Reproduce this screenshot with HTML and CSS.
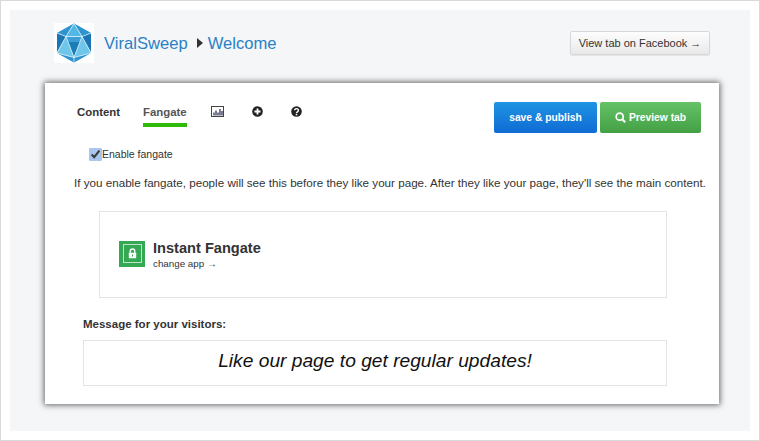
FILE: index.html
```html
<!DOCTYPE html>
<html lang="en">
<head>
<meta charset="utf-8">
<title>ViralSweep</title>
<link rel="stylesheet" href="styles.css">
</head>
<body>
<div class="frame">
  <div class="panel">
    <header class="top">
      <div class="logo">
        <svg width="40" height="40" viewBox="0 0 40 40">
          <polygon points="20,.5 37,10 37,30 20,39.500 3,30 3,10" fill="#6fc6ea"/>
          <polygon points="20,.5 37,10 28,13.500" fill="#2f93cf"/>
          <polygon points="20,.5 3,10 12,13.500" fill="#2f93cf"/>
          <polygon points="20,.5 28,13.500 12,13.500" fill="#52b8e6"/>
          <polygon points="3,10 12,13.500 3,29" fill="#1b75b5"/>
          <polygon points="37,10 28,13.500 37,29" fill="#1b75b5"/>
          <polygon points="12,14 28,14 20,34" fill="#1b7db5"/>
          <polygon points="12,14 28,14 26,19 14,19" fill="#3d9fd6"/>
          <polygon points="20,39.500 3,30 20,34.500" fill="#2f93cf"/>
          <polygon points="20,39.500 37,30 20,34.500" fill="#2f93cf"/>
          <path d="M20 .5L12 13.500H28ZM3 10L12 13.500M37 10L28 13.500M3 30L12 13.500M37 30L28 13.500M12 13.500L20 34.500L28 13.500M3 30L20 34.500L37 30M20 34.500V39.500" fill="none" stroke="#e4f4fb" stroke-width=".8"/>
        </svg>
      </div>
      <h1 class="crumbs"><span>ViralSweep</span><i class="caret"></i><span>Welcome</span></h1>
      <a class="fb-btn">View tab on Facebook →</a>
    </header>
    <main class="card">
      <div class="toolbar">
        <nav class="tabs">
          <a class="tab">Content</a>
          <a class="tab active">Fangate</a>
          <a class="tab icon">
            <svg width="13" height="11" viewBox="0 0 13 11"><rect x=".5" y=".5" width="12" height="10" fill="#fff" stroke="#444"/><path d="M3 9.500V6.500M5 9.500V4.500M7 9.500V6.500M9 9.500V3M11 9.500V5" stroke="#22224a" stroke-width="1.200"/></svg>
          </a>
          <a class="tab icon">
            <svg width="11" height="11" viewBox="0 0 11 11"><circle cx="5.500" cy="5.500" r="5.300" fill="#222"/><path d="M5.500 2.500v6M2.500 5.500h6" stroke="#fff" stroke-width="1.800"/></svg>
          </a>
          <a class="tab icon">
            <svg width="11" height="11" viewBox="0 0 11 11"><circle cx="5.500" cy="5.500" r="5.300" fill="#222"/><path d="M3.600 4.300a1.900 1.700 0 1 1 2.900 1.500c-.7.400-1 .7-1 1.300" fill="none" stroke="#fff" stroke-width="1.400"/><rect x="4.700" y="7.800" width="1.600" height="1.500" fill="#fff"/></svg>
          </a>
        </nav>
        <div class="actions">
          <a class="btn blue">save &amp; publish</a>
          <a class="btn green">
            <svg width="11" height="11" viewBox="0 0 11 11"><circle cx="4.700" cy="4.700" r="3.500" fill="none" stroke="#fff" stroke-width="1.700"/><path d="M7.300 7.300L10.200 10.200" stroke="#fff" stroke-width="2"/></svg>
            Preview tab
          </a>
        </div>
      </div>
      <label class="enable"><input type="checkbox" checked>Enable fangate</label>
      <p class="intro">If you enable fangate, people will see this before they like your page. After they like your page, they'll see the main content.</p>
      <section class="app">
        <div class="app-icon">
          <svg width="19" height="19" viewBox="0 0 19 19"><rect x=".5" y=".5" width="18" height="18" fill="none" stroke="#bfe3c8"/><path d="M7.200 9V7.300a2.300 2.300 0 0 1 4.600 0V9" fill="none" stroke="#fff" stroke-width="1.300"/><rect x="5.800" y="8.800" width="7.400" height="5.400" rx=".5" fill="#fff"/><rect x="9" y="10.500" width="1" height="2" fill="#35a853"/></svg>
        </div>
        <div class="app-text">
          <div class="app-name">Instant Fangate</div>
          <div class="app-change">change app →</div>
        </div>
      </section>
      <div class="msg-label">Message for your visitors:</div>
      <div class="msg">Like our page to get regular updates!</div>
    </main>
  </div>
</div>
</body>
</html>
```
FILE: styles.css
```css
* { box-sizing: border-box; }
html, body { margin: 0; height: 100%; }
body { font-family: "Liberation Sans", Arial, sans-serif; background: #fff; color: #333; overflow: hidden; }
.frame { width: 760px; height: 441px; border: 1px solid #d9d9d9; padding: 9px 9px 9px; }
.panel { height: 421px; background: #f4f6f8; padding: 13px 40px 0 44px; }
.top { display: flex; align-items: center; height: 40px; }
.logo { width: 40px; height: 40px; background: #fff; flex: none; }
.logo svg { display: block; }
.crumbs { display: flex; align-items: center; margin: 0 0 0 10px; padding-top: 1px; font-size: 16.600px; font-weight: 400; color: #2b80c5; flex: 1; }
.caret { width: 0; height: 0; margin: -1px 5px 0 9px; border-left: 6px solid #333; border-top: 5px solid transparent; border-bottom: 5px solid transparent; }
.fb-btn { width: 140px; height: 24px; line-height: 22px; margin-top: -1px; text-align: center; font-size: 11px; color: #333; border: 1px solid #d8d8d8; border-radius: 2px; background: linear-gradient(#fdfdfd, #e9e9e9); box-shadow: 0 1px 1px rgba(0,0,0,.08); }
.card { width: 674px; height: 321px; margin: 20px 0 0 -9px; background: #fff; padding: 19px 18px 0 32px; box-shadow: 0 0 6px 1px rgba(0,0,0,.6); }
.toolbar { display: flex; justify-content: space-between; height: 31px; }
.tabs { display: flex; align-items: flex-start; }
.tab { display: block; height: 25px; font-size: 11.400px; line-height: 20px; font-weight: 700; color: #333; margin-right: 23px; }
.tab.active { color: #555; border-bottom: 4px solid #2fbb0a; height: 25px; margin-right: 24px; }
.tab.icon { margin-right: 28px; }
.tab.icon svg { display: block; margin-top: 4px; }
.actions { display: flex; gap: 3px; }
.btn { display: flex; align-items: center; justify-content: center; gap: 3px; height: 31px; font-size: 10.300px; font-weight: 700; color: #fff; border-radius: 2px; }
.blue { width: 103px; background: linear-gradient(#1f94e2, #0f6bd3); }
.green { width: 101px; background: linear-gradient(#66c266, #44a044); }
.enable { display: flex; align-items: center; margin: 11px 0 0 12px; height: 20px; font-size: 10.500px; color: #333; }
.enable input { width: 13px; height: 13px; margin: 0; accent-color: #a9c6ee; }
.intro { margin: 11px 0 0 -3px; font-size: 11.650px; line-height: 16px; white-space: nowrap; color: #333; }
.app { display: flex; align-items: center; gap: 8px; width: 568px; height: 87px; margin: 20px 0 0 22px; padding: 0 0 2px 19px; border: 1px solid #e4e4e4; }
.app-icon { width: 26px; height: 26px; background: #35a853; display: flex; align-items: center; justify-content: center; }
.app-text { padding-top: 2px; }
.app-name { font-size: 14.600px; font-weight: 700; line-height: 17px; color: #333; }
.app-change { margin-top: 1px; font-size: 9.800px; line-height: 12px; color: #333; }
.msg-label { margin: 20px 0 0 6px; font-size: 11.500px; font-weight: 700; line-height: 13px; color: #333; }
.msg { width: 584px; height: 46px; margin: 9px 0 0 6px; border: 1px solid #e4e4e4; text-align: center; font-size: 19.200px; line-height: 40px; font-style: italic; color: #111; }
```
